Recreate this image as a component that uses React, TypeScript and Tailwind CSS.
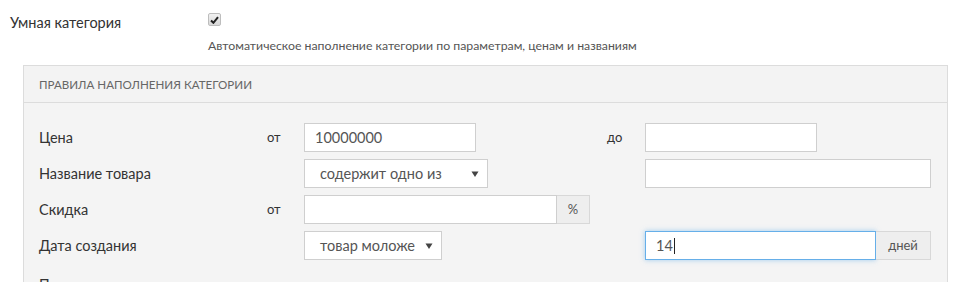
import React from "react";

const font = { fontFamily: "Lato, 'Open Sans', sans-serif" };

function Caret() {
  return (
    <svg width="8" height="8" viewBox="0 0 8 8" className="shrink-0">
      <path d="M0.5 1.5 H7.5 L4 7 Z" fill="#444" />
    </svg>
  );
}

function Select({ label, width }: { label: string; width: string }) {
  return (
    <div
      className={`${width} h-[29px] bg-white border border-[#cfcfcf] flex items-center justify-between pl-[15px] pr-[8px] text-[14.5px] text-[#555]`}
    >
      <span>{label}</span>
      <Caret />
    </div>
  );
}

function Input({ value, width, focus }: { value?: string; width: string; focus?: boolean }) {
  return (
    <div
      className={`${width} h-[29px] bg-white border flex items-center px-[10px] text-[14.5px] text-[#555] ${
        focus ? "border-[#66afe9] shadow-[0_0_5px_rgba(102,175,233,0.6)]" : "border-[#cfcfcf]"
      }`}
    >
      {value}
      {focus && <span className="w-px h-[16px] bg-[#222] ml-px" />}
    </div>
  );
}

function Addon({ text, width }: { text: string; width: string }) {
  return (
    <div
      className={`${width} h-[29px] bg-[#eeeeee] border border-l-0 border-[#d8d8d8] flex items-center justify-center text-[13px] text-[#555]`}
    >
      {text}
    </div>
  );
}

export default function App() {
  return (
    <div className="w-[958px] h-[282px] overflow-hidden bg-white text-[#333]" style={font}>
      <div className="flex pt-[11px] pl-[10px]">
        <div className="w-[198px] text-[14.5px] pt-[1px]">Умная категория</div>
        <div className="flex flex-col">
          <div className="w-[13px] h-[13px] mt-[2px] rounded-[2px] border border-[#bdbdbd] bg-gradient-to-b from-[#f2f2f2] to-[#d8d8d8] flex items-center justify-center">
            <svg width="9" height="8" viewBox="0 0 9 8">
              <path d="M1 4.5 L3.4 6.8 L8 1.2" stroke="#222" strokeWidth="2" fill="none" />
            </svg>
          </div>
          <div className="mt-[11px] text-[12.3px] text-[#555]">
            Автоматическое наполнение категории по параметрам, ценам и названиям
          </div>
        </div>
      </div>

      <div className="ml-[23px] mr-[10px] mt-[10px] border border-[#dcdcdc] bg-[#f4f4f4]">
        <div className="h-[37px] border-b border-[#dcdcdc] bg-[#f3f3f3] flex items-center px-[15px] text-[11.6px] text-[#666] uppercase">
          Правила наполнения категории
        </div>
        <div className="pl-[15px] pt-[20px] grid grid-cols-[228px_37px_303px_38px_auto] gap-y-[7px] items-center text-[14.5px]">
          <div>Цена</div>
          <div className="text-[13px]">от</div>
          <div>
            <Input value="10000000" width="w-[172px]" />
          </div>
          <div className="text-[13px]">до</div>
          <div>
            <Input width="w-[172px]" />
          </div>

          <div>Название товара</div>
          <div />
          <div>
            <Select label="содержит одно из" width="w-[184px]" />
          </div>
          <div />
          <div>
            <Input width="w-[286px]" />
          </div>

          <div>Скидка</div>
          <div className="text-[13px]">от</div>
          <div className="flex">
            <Input width="w-[253px]" />
            <Addon text="%" width="w-[33px]" />
          </div>
          <div />
          <div />

          <div>Дата создания</div>
          <div />
          <div>
            <Select label="товар моложе" width="w-[138px]" />
          </div>
          <div />
          <div className="flex">
            <Input value="14" width="w-[231px]" focus />
            <Addon text="дней" width="w-[55px]" />
          </div>

          <div className="h-[29px] pt-[7px]">Параметры</div>
        </div>
      </div>
    </div>
  );
}
